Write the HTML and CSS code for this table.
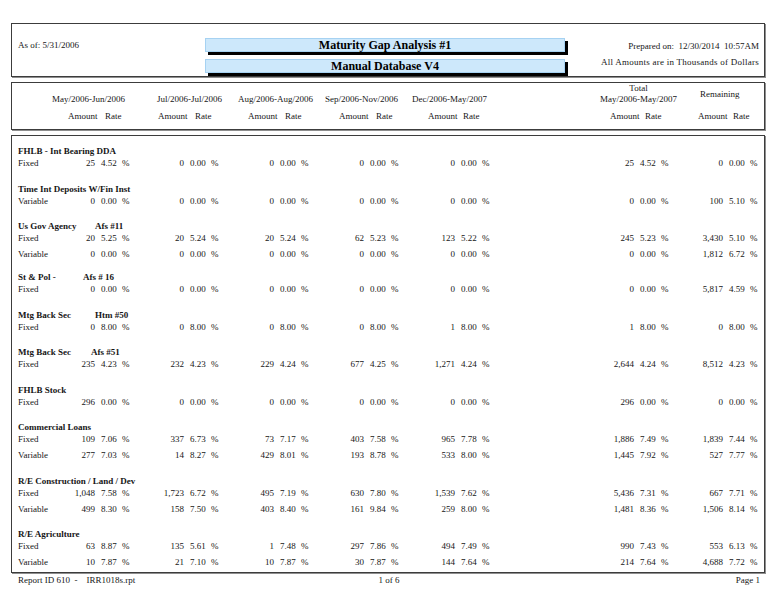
FILE: index.html
```html
<!DOCTYPE html>
<html>
<head>
<meta charset="utf-8">
<title>Maturity Gap Analysis #1</title>
<link rel="stylesheet" href="styles.css">
</head>
<body>
<div class="page">
  <div class="box hdr">
    <div class="asof">As of: 5/31/2006</div>
    <div class="titles">
      <div class="bar">Maturity Gap Analysis #1</div>
      <div class="bar">Manual Database V4</div>
    </div>
    <div class="prep">
      <div>Prepared on:&nbsp; 12/30/2014&nbsp; 10:57AM</div>
      <div class="units">All Amounts are in Thousands of Dollars</div>
    </div>
  </div>

  <div class="box colhead">
    <div class="periods">
      <div class="p p1">May/2006-Jun/2006</div>
      <div class="p p2">Jul/2006-Jul/2006</div>
      <div class="p p3">Aug/2006-Aug/2006</div>
      <div class="p p4">Sep/2006-Nov/2006</div>
      <div class="p p5">Dec/2006-May/2007</div>
      <div class="p ptot"><span>Total</span><span>May/2006-May/2007</span></div>
      <div class="p prem">Remaining</div>
    </div>
    <div class="ar">
      <span></span>
      <span>Amount</span><span>Rate</span>
      <span>Amount</span><span>Rate</span>
      <span>Amount</span><span>Rate</span>
      <span>Amount</span><span>Rate</span>
      <span>Amount</span><span>Rate</span>
      <span>Amount</span><span>Rate</span>
      <span>Amount</span><span>Rate</span>
    </div>
  </div>

  <div class="box body">
    <div class="grp">
      <div class="gt">FHLB - Int Bearing DDA</div>
      <div class="row"><span class="lbl">Fixed</span><span class="a">25</span><span class="r">4.52 %</span><span class="a">0</span><span class="r">0.00 %</span><span class="a">0</span><span class="r">0.00 %</span><span class="a">0</span><span class="r">0.00 %</span><span class="a">0</span><span class="r">0.00 %</span><span class="a">25</span><span class="r">4.52 %</span><span class="a">0</span><span class="r">0.00 %</span></div>
    </div>
    <div class="grp">
      <div class="gt">Time Int Deposits W/Fin Inst</div>
      <div class="row"><span class="lbl">Variable</span><span class="a">0</span><span class="r">0.00 %</span><span class="a">0</span><span class="r">0.00 %</span><span class="a">0</span><span class="r">0.00 %</span><span class="a">0</span><span class="r">0.00 %</span><span class="a">0</span><span class="r">0.00 %</span><span class="a">0</span><span class="r">0.00 %</span><span class="a">100</span><span class="r">5.10 %</span></div>
    </div>
    <div class="grp tight">
      <div class="gt"><span class="gn">Us Gov Agency</span><span class="gs">Afs #11</span></div>
      <div class="row"><span class="lbl">Fixed</span><span class="a">20</span><span class="r">5.25 %</span><span class="a">20</span><span class="r">5.24 %</span><span class="a">20</span><span class="r">5.24 %</span><span class="a">62</span><span class="r">5.23 %</span><span class="a">123</span><span class="r">5.22 %</span><span class="a">245</span><span class="r">5.23 %</span><span class="a">3,430</span><span class="r">5.10 %</span></div>
      <div class="row"><span class="lbl">Variable</span><span class="a">0</span><span class="r">0.00 %</span><span class="a">0</span><span class="r">0.00 %</span><span class="a">0</span><span class="r">0.00 %</span><span class="a">0</span><span class="r">0.00 %</span><span class="a">0</span><span class="r">0.00 %</span><span class="a">0</span><span class="r">0.00 %</span><span class="a">1,812</span><span class="r">6.72 %</span></div>
    </div>
    <div class="grp">
      <div class="gt"><span class="gn short">St &amp; Pol -</span><span class="gs">Afs # 16</span></div>
      <div class="row"><span class="lbl">Fixed</span><span class="a">0</span><span class="r">0.00 %</span><span class="a">0</span><span class="r">0.00 %</span><span class="a">0</span><span class="r">0.00 %</span><span class="a">0</span><span class="r">0.00 %</span><span class="a">0</span><span class="r">0.00 %</span><span class="a">0</span><span class="r">0.00 %</span><span class="a">5,817</span><span class="r">4.59 %</span></div>
    </div>
    <div class="grp">
      <div class="gt"><span class="gn">Mtg Back Sec</span><span class="gs">Htm #50</span></div>
      <div class="row"><span class="lbl">Fixed</span><span class="a">0</span><span class="r">8.00 %</span><span class="a">0</span><span class="r">8.00 %</span><span class="a">0</span><span class="r">8.00 %</span><span class="a">0</span><span class="r">8.00 %</span><span class="a">1</span><span class="r">8.00 %</span><span class="a">1</span><span class="r">8.00 %</span><span class="a">0</span><span class="r">8.00 %</span></div>
    </div>
    <div class="grp">
      <div class="gt"><span class="gn mid">Mtg Back Sec</span><span class="gs">Afs #51</span></div>
      <div class="row"><span class="lbl">Fixed</span><span class="a">235</span><span class="r">4.23 %</span><span class="a">232</span><span class="r">4.23 %</span><span class="a">229</span><span class="r">4.24 %</span><span class="a">677</span><span class="r">4.25 %</span><span class="a">1,271</span><span class="r">4.24 %</span><span class="a">2,644</span><span class="r">4.24 %</span><span class="a">8,512</span><span class="r">4.23 %</span></div>
    </div>
    <div class="grp">
      <div class="gt">FHLB Stock</div>
      <div class="row"><span class="lbl">Fixed</span><span class="a">296</span><span class="r">0.00 %</span><span class="a">0</span><span class="r">0.00 %</span><span class="a">0</span><span class="r">0.00 %</span><span class="a">0</span><span class="r">0.00 %</span><span class="a">0</span><span class="r">0.00 %</span><span class="a">296</span><span class="r">0.00 %</span><span class="a">0</span><span class="r">0.00 %</span></div>
    </div>
    <div class="grp">
      <div class="gt">Commercial Loans</div>
      <div class="row"><span class="lbl">Fixed</span><span class="a">109</span><span class="r">7.06 %</span><span class="a">337</span><span class="r">6.73 %</span><span class="a">73</span><span class="r">7.17 %</span><span class="a">403</span><span class="r">7.58 %</span><span class="a">965</span><span class="r">7.78 %</span><span class="a">1,886</span><span class="r">7.49 %</span><span class="a">1,839</span><span class="r">7.44 %</span></div>
      <div class="row"><span class="lbl">Variable</span><span class="a">277</span><span class="r">7.03 %</span><span class="a">14</span><span class="r">8.27 %</span><span class="a">429</span><span class="r">8.01 %</span><span class="a">193</span><span class="r">8.78 %</span><span class="a">533</span><span class="r">8.00 %</span><span class="a">1,445</span><span class="r">7.92 %</span><span class="a">527</span><span class="r">7.77 %</span></div>
    </div>
    <div class="grp">
      <div class="gt">R/E Construction / Land / Dev</div>
      <div class="row"><span class="lbl">Fixed</span><span class="a">1,048</span><span class="r">7.58 %</span><span class="a">1,723</span><span class="r">6.72 %</span><span class="a">495</span><span class="r">7.19 %</span><span class="a">630</span><span class="r">7.80 %</span><span class="a">1,539</span><span class="r">7.62 %</span><span class="a">5,436</span><span class="r">7.31 %</span><span class="a">667</span><span class="r">7.71 %</span></div>
      <div class="row"><span class="lbl">Variable</span><span class="a">499</span><span class="r">8.30 %</span><span class="a">158</span><span class="r">7.50 %</span><span class="a">403</span><span class="r">8.40 %</span><span class="a">161</span><span class="r">9.84 %</span><span class="a">259</span><span class="r">8.00 %</span><span class="a">1,481</span><span class="r">8.36 %</span><span class="a">1,506</span><span class="r">8.14 %</span></div>
    </div>
    <div class="grp">
      <div class="gt">R/E Agriculture</div>
      <div class="row"><span class="lbl">Fixed</span><span class="a">63</span><span class="r">8.87 %</span><span class="a">135</span><span class="r">5.61 %</span><span class="a">1</span><span class="r">7.48 %</span><span class="a">297</span><span class="r">7.86 %</span><span class="a">494</span><span class="r">7.49 %</span><span class="a">990</span><span class="r">7.43 %</span><span class="a">553</span><span class="r">6.13 %</span></div>
      <div class="row"><span class="lbl">Variable</span><span class="a">10</span><span class="r">7.87 %</span><span class="a">21</span><span class="r">7.10 %</span><span class="a">10</span><span class="r">7.87 %</span><span class="a">30</span><span class="r">7.87 %</span><span class="a">144</span><span class="r">7.64 %</span><span class="a">214</span><span class="r">7.64 %</span><span class="a">4,688</span><span class="r">7.72 %</span></div>
    </div>
  </div>

  <div class="foot">
    <span class="fl">Report ID 610&nbsp; -&nbsp;&nbsp;&nbsp; IRR1018s.rpt</span>
    <span class="fc">1 of 6</span>
    <span class="fr">Page 1</span>
  </div>
</div>
</body>
</html>
```

FILE: styles.css
```css
* { box-sizing: border-box; }
html, body { margin: 0; padding: 0; background: #fff; }
body {
  font-family: "Liberation Serif", "Times New Roman", serif;
  font-size: 9px;
  color: #161616;
}
.page {
  width: 778px;
  height: 590px;
  padding: 23px 0 0 11px;
}
.box {
  width: 754px;
  border: 1px solid #3c3c3c;
  box-shadow: 1px 1px 0 #8e8e8e;
  background: #fff;
}

/* header */
.hdr {
  height: 54px;
  display: grid;
  grid-template-columns: 193px 360px 1fr;
}
.asof {
  padding: 16px 0 0 6px;
  line-height: 11px;
}
.titles {
  padding-top: 14px;
  display: flex;
  flex-direction: column;
  gap: 7px;
}
.bar {
  height: 14px;
  background: #cde8fb;
  border: 1px solid #a6d2f2;
  box-shadow: 3px 3px 0 #000;
  font-weight: bold;
  font-size: 12px;
  line-height: 12px;
  text-align: center;
  color: #000;
}
.prep {
  padding: 14px 5px 0 0;
  text-align: right;
  line-height: 16px;
}
.units { letter-spacing: 0.25px; }

/* column header */
.colhead {
  margin-top: 5px;
  height: 48px;
}
.periods {
  display: grid;
  grid-template-columns: 40px 105px 81px 87px 87px 188px 100px 1fr;
  grid-template-rows: 11px 11px;
  line-height: 11px;
}
.p { grid-row: 2; white-space: nowrap; }
.p1 { grid-column: 2; }
.p2 { grid-column: 3; }
.p3 { grid-column: 4; }
.p4 { grid-column: 5; }
.p5 { grid-column: 6; }
.ptot {
  grid-column: 7;
  grid-row: 1 / span 2;
  width: 77px;
  display: flex;
  flex-direction: column;
  align-items: center;
}
.prem {
  grid-column: 8;
  grid-row: 1 / span 2;
  align-self: center;
}
.ar {
  margin-top: 6px;
  display: grid;
  grid-template-columns: 56px 37px 53px 37px 53px 37px 54px 37px 52px 35px 147px 35px 53px 35px 1fr;
  line-height: 11px;
}

/* body */
.body {
  margin-top: 5px;
  height: 438px;
  padding: 10px 0 0 6px;
}
.grp {
  margin-bottom: 13.5px;
  display: flex;
  flex-direction: column;
  gap: 2px;
}
.grp.tight { margin-bottom: 11px; }
.gt {
  font-weight: bold;
  line-height: 10px;
  height: 10px;
  display: flex;
  margin-bottom: -2px;
  white-space: nowrap;
}
.gn { width: 77px; }
.gn.short { width: 65px; }
.gn.mid { width: 73px; }
.row {
  display: grid;
  grid-template-columns: 40px 37px 50px 39px 56px 34px 56px 34px 56px 35px 125px 54px 56px 33px 40px;
  line-height: 14px;
  height: 14px;
  white-space: nowrap;
}
.a { text-align: right; }
.r { padding-left: 6px; word-spacing: 3px; }

/* footer */
.foot {
  width: 754px;
  margin-top: 2px;
  display: grid;
  grid-template-columns: 1fr auto 1fr;
  line-height: 11px;
  padding: 0 5px 0 7px;
}
.fc { text-align: center; }
.fr { text-align: right; }
```
